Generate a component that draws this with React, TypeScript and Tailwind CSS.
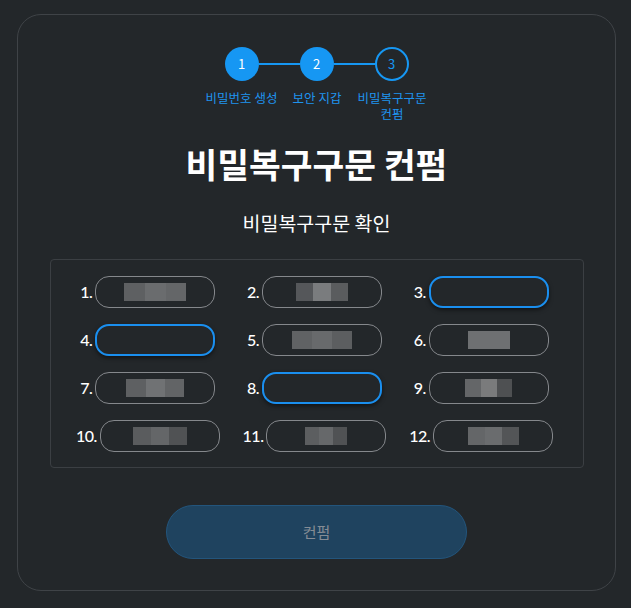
import React from "react";

const words = [
  { n: 1, blocks: ["#5e6062", "#6a6c6e", "#646668"], w: 62 },
  { n: 2, blocks: ["#55575a", "#7a7c7e", "#5a5c5e"], w: 52 },
  { n: 3, focus: true },
  { n: 4, focus: true },
  { n: 5, blocks: ["#606264", "#686a6c", "#5c5e60"], w: 60 },
  { n: 6, blocks: ["#6e7072", "#6e7072"], w: 42 },
  { n: 7, blocks: ["#5e6062", "#707274", "#626466"], w: 58 },
  { n: 8, focus: true },
  { n: 9, blocks: ["#646668", "#7a7b7c", "#4e5052"], w: 47 },
  { n: 10, blocks: ["#5a5c5e", "#646668", "#505254"], w: 54 },
  { n: 11, blocks: ["#5c5e60", "#66686a", "#505254"], w: 42 },
  { n: 12, blocks: ["#646668", "#6a6c6e", "#535557"], w: 51 },
];

const Step = ({ n, done }: { n: number; done: boolean }) => (
  <div
    className={
      done
        ? "w-[34px] h-[34px] rounded-full bg-[#1697f3] text-white flex items-center justify-center text-[13px]"
        : "w-[34px] h-[34px] rounded-full border-2 border-[#1697f3] text-[#1697f3] flex items-center justify-center text-[13px]"
    }
  >
    {n}
  </div>
);

export default function App() {
  return (
    <div
      className="min-h-[608px] bg-[#23272a] pt-[14px] px-[17px]"
      style={{ fontFamily: '"Noto Sans CJK KR", "Noto Sans", sans-serif' }}
    >
      <div className="w-[599px] h-[577px] border border-[#3f4347] rounded-[24px] flex flex-col items-center pt-[32px]">
        <div className="flex items-center">
          <Step n={1} done />
          <div className="w-[41px] h-[2px] bg-[#1697f3]" />
          <Step n={2} done />
          <div className="w-[41px] h-[2px] bg-[#1697f3]" />
          <Step n={3} done={false} />
        </div>
        <div className="flex mt-[9px] text-[12.5px] leading-[16px] text-[#1f93ee] text-center">
          <div className="w-[76px]">비밀번호 생성</div>
          <div className="w-[75px]">보안 지갑</div>
          <div className="w-[75px]">비밀복구구문 컨펌</div>
        </div>
        <h1 className="mt-[20px] text-[34.5px] leading-[42px] font-bold text-white">
          비밀복구구문 컨펌
        </h1>
        <div className="mt-[26px] text-[19.5px] leading-[26px] text-white">
          비밀복구구문 확인
        </div>
        <div className="mt-[23px] w-[534px] border border-[#3b3f43] rounded-[4px] px-4 pt-[16px] pb-[15px] grid grid-cols-3 gap-y-[16px]">
          {words.map((w) => (
            <div key={w.n} className="flex items-center justify-center gap-[3px] pr-[4px]">
              <span
                className="text-white text-[16px] tracking-[-0.5px]"
                style={{ fontFamily: '"Lato", sans-serif', fontWeight: 500 }}
              >
                {w.n}.
              </span>
              {w.focus ? (
                <div className="w-[120px] h-[32px] rounded-[14px] border-2 border-[#1a8fef] shadow-[0_2px_4px_rgba(0,0,0,0.5)]" />
              ) : (
                <div className="w-[120px] h-[32px] rounded-[14px] border border-[#85888c] flex items-center justify-center">
                  <div className="flex h-[18px]" style={{ width: w.w }}>
                    {w.blocks!.map((c, i) => (
                      <div key={i} className="flex-1 h-full" style={{ background: c }} />
                    ))}
                  </div>
                </div>
              )}
            </div>
          ))}
        </div>
        <button className="mt-[37px] w-[301px] h-[54px] rounded-full bg-[#1f435f] border border-[#23557c] text-[#858c94] text-[15px]">
          컨펌
        </button>
      </div>
    </div>
  );
}
